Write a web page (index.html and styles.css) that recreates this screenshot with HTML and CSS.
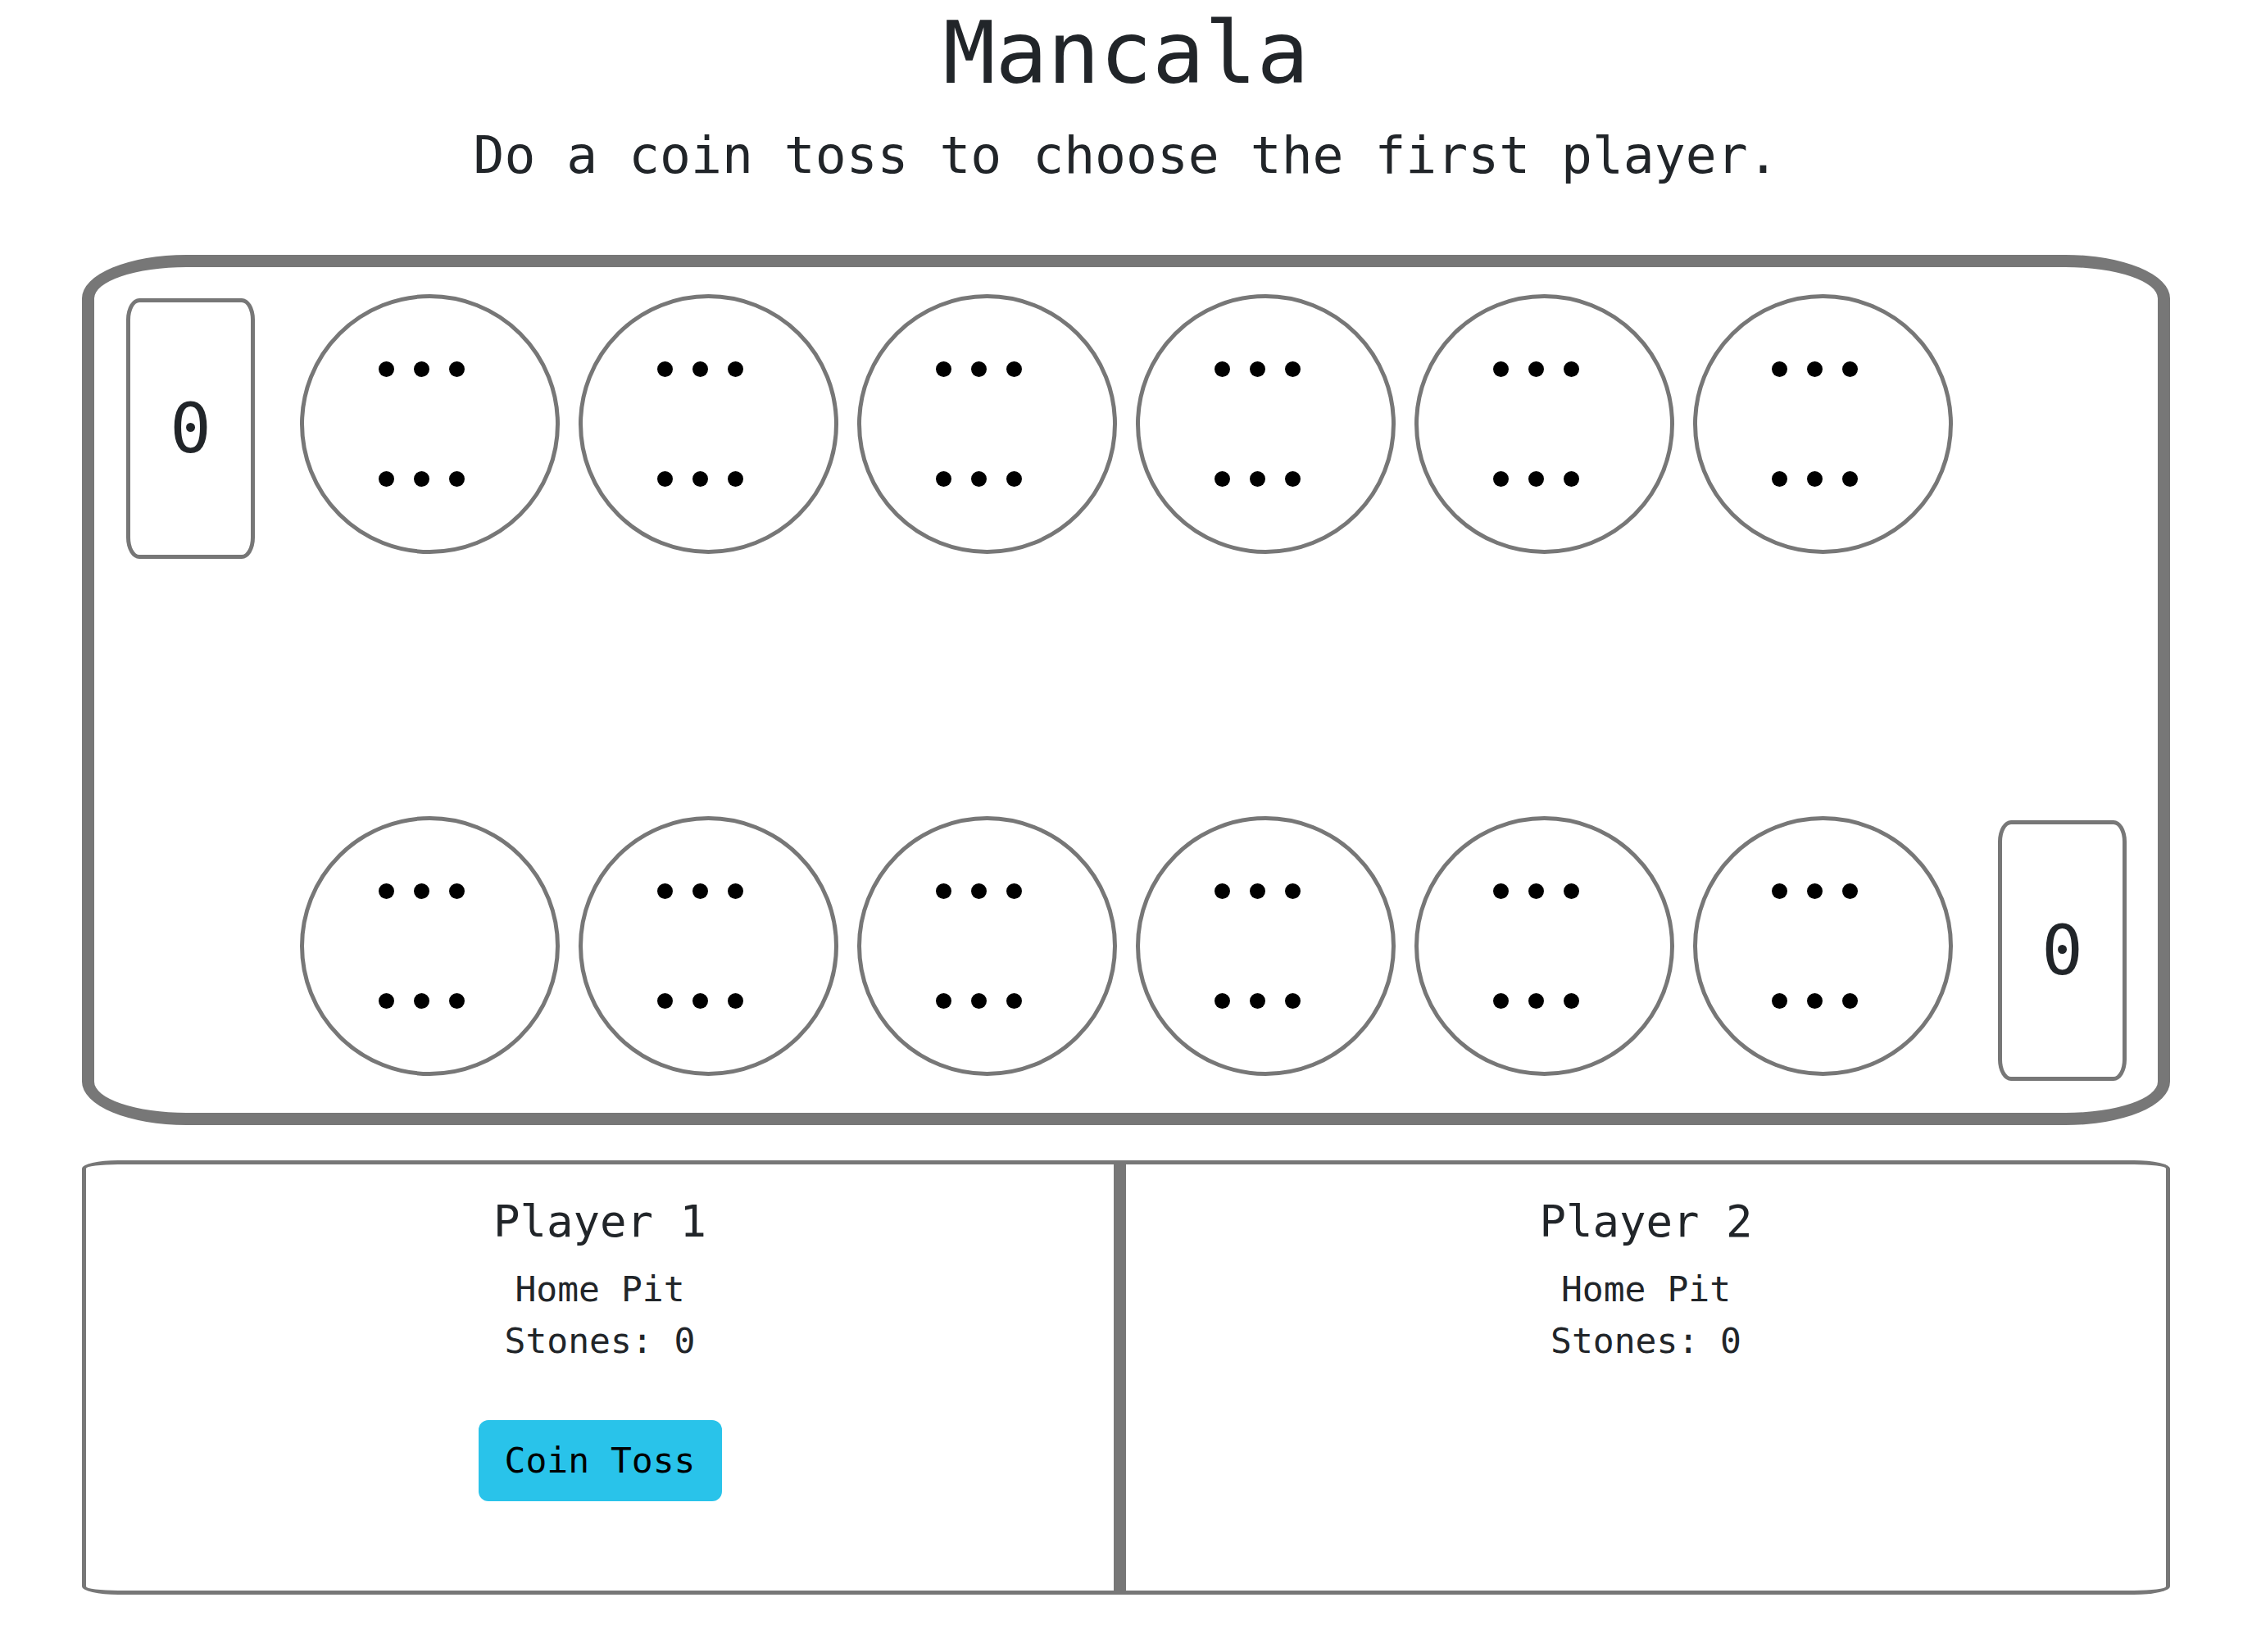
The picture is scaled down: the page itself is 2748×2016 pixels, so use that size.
FILE: index.html
```html
<!DOCTYPE html>
<html lang="en">
<head>
<meta charset="utf-8">
<title>Mancala</title>
<link rel="stylesheet" href="styles.css">
</head>
<body>
<main class="page">
  <h1 class="title">Mancala</h1>
  <p class="subtitle">Do a coin toss to choose the first player.</p>

  <section class="board">
    <div class="board-row">
      <div class="store">0</div>
      <div class="pits">
        <div class="pit"><div class="stones"><span class="stone"></span><span class="stone"></span><span class="stone"></span><span class="stone"></span><span class="stone"></span><span class="stone"></span></div></div>
        <div class="pit"><div class="stones"><span class="stone"></span><span class="stone"></span><span class="stone"></span><span class="stone"></span><span class="stone"></span><span class="stone"></span></div></div>
        <div class="pit"><div class="stones"><span class="stone"></span><span class="stone"></span><span class="stone"></span><span class="stone"></span><span class="stone"></span><span class="stone"></span></div></div>
        <div class="pit"><div class="stones"><span class="stone"></span><span class="stone"></span><span class="stone"></span><span class="stone"></span><span class="stone"></span><span class="stone"></span></div></div>
        <div class="pit"><div class="stones"><span class="stone"></span><span class="stone"></span><span class="stone"></span><span class="stone"></span><span class="stone"></span><span class="stone"></span></div></div>
        <div class="pit"><div class="stones"><span class="stone"></span><span class="stone"></span><span class="stone"></span><span class="stone"></span><span class="stone"></span><span class="stone"></span></div></div>
      </div>
      <div class="store-spacer"></div>
    </div>
    <div class="board-row">
      <div class="store-spacer"></div>
      <div class="pits">
        <div class="pit"><div class="stones"><span class="stone"></span><span class="stone"></span><span class="stone"></span><span class="stone"></span><span class="stone"></span><span class="stone"></span></div></div>
        <div class="pit"><div class="stones"><span class="stone"></span><span class="stone"></span><span class="stone"></span><span class="stone"></span><span class="stone"></span><span class="stone"></span></div></div>
        <div class="pit"><div class="stones"><span class="stone"></span><span class="stone"></span><span class="stone"></span><span class="stone"></span><span class="stone"></span><span class="stone"></span></div></div>
        <div class="pit"><div class="stones"><span class="stone"></span><span class="stone"></span><span class="stone"></span><span class="stone"></span><span class="stone"></span><span class="stone"></span></div></div>
        <div class="pit"><div class="stones"><span class="stone"></span><span class="stone"></span><span class="stone"></span><span class="stone"></span><span class="stone"></span><span class="stone"></span></div></div>
        <div class="pit"><div class="stones"><span class="stone"></span><span class="stone"></span><span class="stone"></span><span class="stone"></span><span class="stone"></span><span class="stone"></span></div></div>
      </div>
      <div class="store">0</div>
    </div>
  </section>

  <section class="players">
    <div class="player player-left">
      <h2 class="player-name">Player 1</h2>
      <p class="player-info">Home Pit</p>
      <p class="player-info">Stones: 0</p>
      <button class="btn-toss" type="button">Coin Toss</button>
    </div>
    <div class="player player-right">
      <h2 class="player-name">Player 2</h2>
      <p class="player-info">Home Pit</p>
      <p class="player-info">Stones: 0</p>
    </div>
  </section>
</main>
</body>
</html>
```

FILE: styles.css
```css
* {
  box-sizing: border-box;
}

html, body {
  margin: 0;
  padding: 0;
  background: #ffffff;
}

body {
  font-family: "DejaVu Sans Mono", "Liberation Mono", monospace;
  color: #212529;
}

.page {
  width: 2548px;
  margin: 0 auto;
  padding-top: 5px;
  text-align: center;
}

.title {
  margin: 0;
  font-size: 106px;
  line-height: 120px;
  font-weight: 400;
}

.subtitle {
  margin: 25px 0 0;
  font-size: 63px;
  line-height: 80px;
}

.board {
  margin-top: 81px;
  width: 2548px;
  height: 1062px;
  border: 15px solid #777777;
  border-radius: 5%;
  padding: 33px 39px 39px;
  display: flex;
  flex-direction: column;
  justify-content: space-between;
}

.board-row {
  display: flex;
  align-items: flex-start;
  gap: 55px;
}

.store,
.store-spacer {
  flex: 0 0 157px;
  width: 157px;
  height: 318px;
  margin-top: 5px;
}

.store {
  border: 5px solid #777777;
  border-radius: 16px / 26px;
  display: flex;
  align-items: center;
  justify-content: center;
  font-size: 84px;
  line-height: 1;
}

.pits {
  display: flex;
  gap: 23px;
}

.pit {
  width: 317px;
  height: 317px;
  border: 5px solid #777777;
  border-radius: 50%;
  display: flex;
  align-items: center;
  justify-content: center;
}

.stones {
  display: grid;
  grid-template-columns: repeat(3, 19px);
  column-gap: 24px;
  row-gap: 115px;
  margin-right: 21px;
}

.stone {
  width: 19px;
  height: 19px;
  border-radius: 50%;
  background: #000000;
}

.players {
  margin-top: 43px;
  display: flex;
  width: 2548px;
}

.player {
  flex: 0 0 50%;
  width: 50%;
  height: 530px;
  border: 5px solid #777777;
  padding-top: 37px;
  display: flex;
  flex-direction: column;
  align-items: center;
}

.player-left {
  border-right: 15px solid #777777;
  border-radius: 44px 0 0 44px / 10px 0 0 10px;
}

.player-right {
  border-left: 0;
  border-radius: 0 44px 44px 0 / 0 10px 10px 0;
}

.player-name {
  margin: 0 0 19px;
  font-size: 54px;
  line-height: 65px;
  font-weight: 400;
}

.player-info {
  margin: 0;
  font-size: 43px;
  line-height: 63px;
}

.btn-toss {
  margin-top: 65px;
  font-family: "DejaVu Sans Mono", "Liberation Mono", monospace;
  font-size: 43px;
  line-height: 64.5px;
  padding: 17px 32px;
  border: 0;
  border-radius: 12px;
  background: #29c3ea;
  color: #000000;
  cursor: pointer;
}
```
